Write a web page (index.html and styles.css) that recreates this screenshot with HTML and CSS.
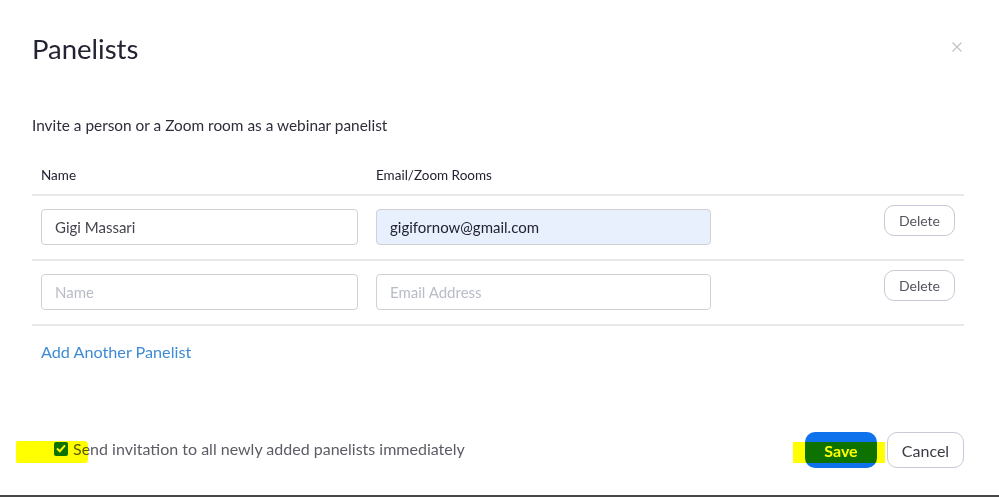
FILE: index.html
```html
<!DOCTYPE html>
<html lang="en">

<head>
    <meta charset="UTF-8">
    <meta name="viewport" content="width=device-width, initial-scale=1.0">
    <title>Panelists</title>
    <link rel="stylesheet" href="styles.css">
</head>

<body>
    <div class="modal">
        <div class="modal-head">
            <h2>Panelists</h2>
            <span class="close">
                <svg width="10" height="10" viewBox="0 0 10 10">
                    <path d="M0.5 0.5 L9.5 9.5 M9.5 0.5 L0.5 9.5" stroke="#c4c4c4" stroke-width="1.3" fill="none" />
                </svg>
            </span>
        </div>

        <p class="intro">Invite a person or a Zoom room as a webinar panelist</p>

        <div class="panel-table">
            <div class="row head-row">
                <div>Name</div>
                <div>Email/Zoom Rooms</div>
                <div></div>
            </div>
            <div class="row">
                <input class="field" type="text" value="Gigi Massari">
                <input class="field filled" type="text" value="gigifornow@gmail.com">
                <button class="btn-delete">Delete</button>
            </div>
            <div class="row">
                <input class="field" type="text" placeholder="Name">
                <input class="field" type="text" placeholder="Email Address">
                <button class="btn-delete">Delete</button>
            </div>
        </div>

        <a class="add-link" href="#">Add Another Panelist</a>

        <div class="modal-foot">
            <label class="invite">
                <span class="check">
                    <svg width="10" height="9" viewBox="0 0 10 9">
                        <path d="M1 4.6 L3.8 7.2 L9 1.4" stroke="#fff" stroke-width="2" fill="none" />
                    </svg>
                </span>
                Send invitation to all newly added panelists immediately
            </label>
            <div class="actions">
                <button class="btn-save">Save</button>
                <button class="btn-cancel">Cancel</button>
            </div>
        </div>

        <!-- highlighter marks drawn over the screenshot -->
        <span class="marker marker-check"></span>
        <span class="marker marker-save"></span>
    </div>
</body>

</html>
```

FILE: styles.css
```css
html {
    height: 100%;
}

body {
    margin: 0;
    padding: 0;
    font-family: Lato, "Open Sans", sans-serif;
    background: #fff;
    color: #232333;
}

.modal {
    position: relative;
    height: 497px;
    box-sizing: border-box;
    padding: 0 35px 0 32px;
    border-bottom: 2px solid #474747;
    display: flex;
    flex-direction: column;
}

.modal-head {
    display: flex;
    justify-content: space-between;
    align-items: flex-start;
    padding-top: 31px;
}

.modal-head h2 {
    margin: 0;
    font-size: 27.5px;
    font-weight: 400;
    line-height: 36px;
    color: #232333;
}

.close {
    display: flex;
    margin-top: 11px;
    margin-right: 2px;
}

.intro {
    margin: 48px 0 0;
    font-size: 15.4px;
    line-height: 20px;
    color: #2e2e3a;
}

.panel-table {
    margin-top: 17px;
}

.row {
    display: grid;
    grid-template-columns: 317px 335px 1fr;
    column-gap: 18px;
    align-items: start;
    padding: 13px 9px 14px 9px;
    border-bottom: 2px solid #e8e8ea;
}

.head-row {
    padding-top: 14px;
    padding-bottom: 10px;
    font-size: 13.5px;
    line-height: 18px;
    color: #232333;
}

.field {
    height: 36px;
    box-sizing: border-box;
    padding: 0 13px;
    border: 1px solid #d0d0d6;
    border-radius: 4px;
    font-family: Lato, sans-serif;
    font-size: 15px;
    color: #44444e;
    background: #fff;
    outline: none;
}

.field::placeholder {
    color: #b8bcc6;
}

.field.filled {
    background: #e8f0fe;
    color: #232333;
}

.btn-delete {
    justify-self: end;
    margin-top: -4px;
    width: 71px;
    height: 31px;
    border: 1px solid #c8c8d8;
    border-radius: 10px;
    background: #fff;
    font-family: Lato, sans-serif;
    font-size: 14px;
    color: #555560;
}

.add-link {
    margin: 16px 0 0 9px;
    font-size: 16.2px;
    line-height: 20px;
    color: #3d8bd6;
    text-decoration: none;
    align-self: flex-start;
}

.modal-foot {
    margin-top: auto;
    margin-bottom: 27px;
    display: flex;
    justify-content: space-between;
    align-items: center;
}

.invite {
    display: flex;
    align-items: center;
    gap: 5px;
    margin-left: 22px;
    margin-bottom: 3px;
    font-size: 16px;
    color: #5c5c66;
}

.check {
    width: 14px;
    height: 14px;
    border-radius: 2px;
    background: #0e72ed;
    display: flex;
    align-items: center;
    justify-content: center;
}

.actions {
    display: flex;
    gap: 10px;
}

.btn-save,
.btn-cancel {
    height: 36px;
    border-radius: 10px;
    font-family: Lato, sans-serif;
    font-size: 16px;
}

.btn-save {
    width: 72px;
    border: none;
    background: #0e72ed;
    color: #fff;
    font-weight: 700;
}

.btn-cancel {
    width: 77px;
    border: 1px solid #c8c8d8;
    background: #fff;
    color: #3a3a44;
}

.marker {
    position: absolute;
    background: #ffff00;
    mix-blend-mode: multiply;
}

.marker-check {
    left: 16px;
    top: 441px;
    width: 72px;
    height: 22px;
    border-radius: 2px 4px 3px 2px;
}

.marker-save {
    left: 793px;
    top: 442px;
    width: 92px;
    height: 21px;
}
```
